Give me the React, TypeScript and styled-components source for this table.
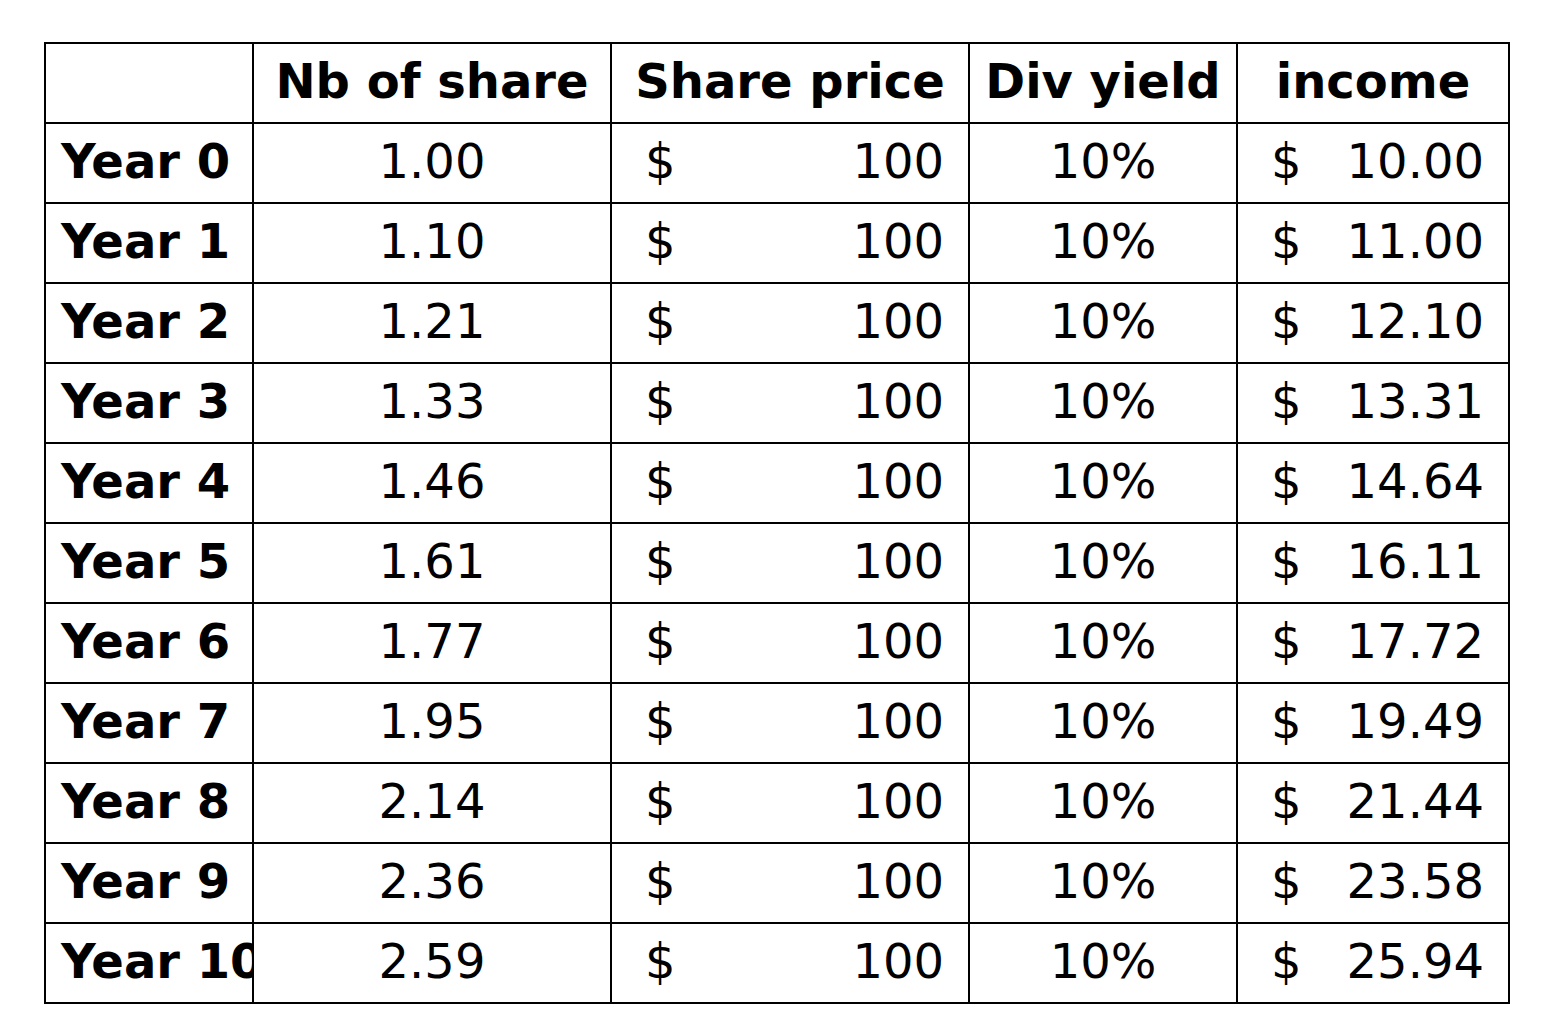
import React from "react";
import styled, { createGlobalStyle } from "styled-components";

const GlobalStyle = createGlobalStyle`
  html, body {
    margin: 0;
    padding: 0;
    background: #ffffff;
  }
`;

const Page = styled.div`
  padding: 42px 0 0 44px;
`;

const Table = styled.div`
  display: grid;
  grid-template-columns: 208px 358px 358px 268px 272px;
  grid-auto-rows: 80px;
  width: fit-content;
  border-top: 2px solid #000;
  border-left: 2px solid #000;
  font-family: "DejaVu Sans", "Liberation Sans", sans-serif;
  color: #000;
`;

const Cell = styled.div<{ $align?: "left" | "center"; $bold?: boolean }>`
  box-sizing: border-box;
  border-right: 2px solid #000;
  border-bottom: 2px solid #000;
  overflow: hidden;
  white-space: nowrap;
  font-size: 48px;
  line-height: 74px;
  padding: 0 ${(p) => (p.$align === "left" ? "0 4px 15px" : "0 4px 0")};
  text-align: ${(p) => p.$align ?? "center"};
  font-weight: ${(p) => (p.$bold ? 700 : 400)};
`;

const MoneyCell = styled.div`
  box-sizing: border-box;
  border-right: 2px solid #000;
  border-bottom: 2px solid #000;
  display: flex;
  justify-content: space-between;
  white-space: nowrap;
  font-size: 48px;
  line-height: 74px;
  padding: 0 24px 4px 33px;
`;

const shares = ["1.00", "1.10", "1.21", "1.33", "1.46", "1.61", "1.77", "1.95", "2.14", "2.36", "2.59"];
const incomes = ["10.00", "11.00", "12.10", "13.31", "14.64", "16.11", "17.72", "19.49", "21.44", "23.58", "25.94"];

export default function App() {
  return (
    <>
      <GlobalStyle />
      <Page>
        <Table>
          <Cell />
          <Cell $bold>Nb of share</Cell>
          <Cell $bold>Share price</Cell>
          <Cell $bold>Div yield</Cell>
          <Cell $bold>income</Cell>
          {shares.map((s, i) => (
            <React.Fragment key={i}>
              <Cell $bold $align="left">Year {i}</Cell>
              <Cell>{s}</Cell>
              <MoneyCell>
                <span>$</span>
                <span>100</span>
              </MoneyCell>
              <Cell>10%</Cell>
              <MoneyCell>
                <span>$</span>
                <span>{incomes[i]}</span>
              </MoneyCell>
            </React.Fragment>
          ))}
        </Table>
      </Page>
    </>
  );
}
